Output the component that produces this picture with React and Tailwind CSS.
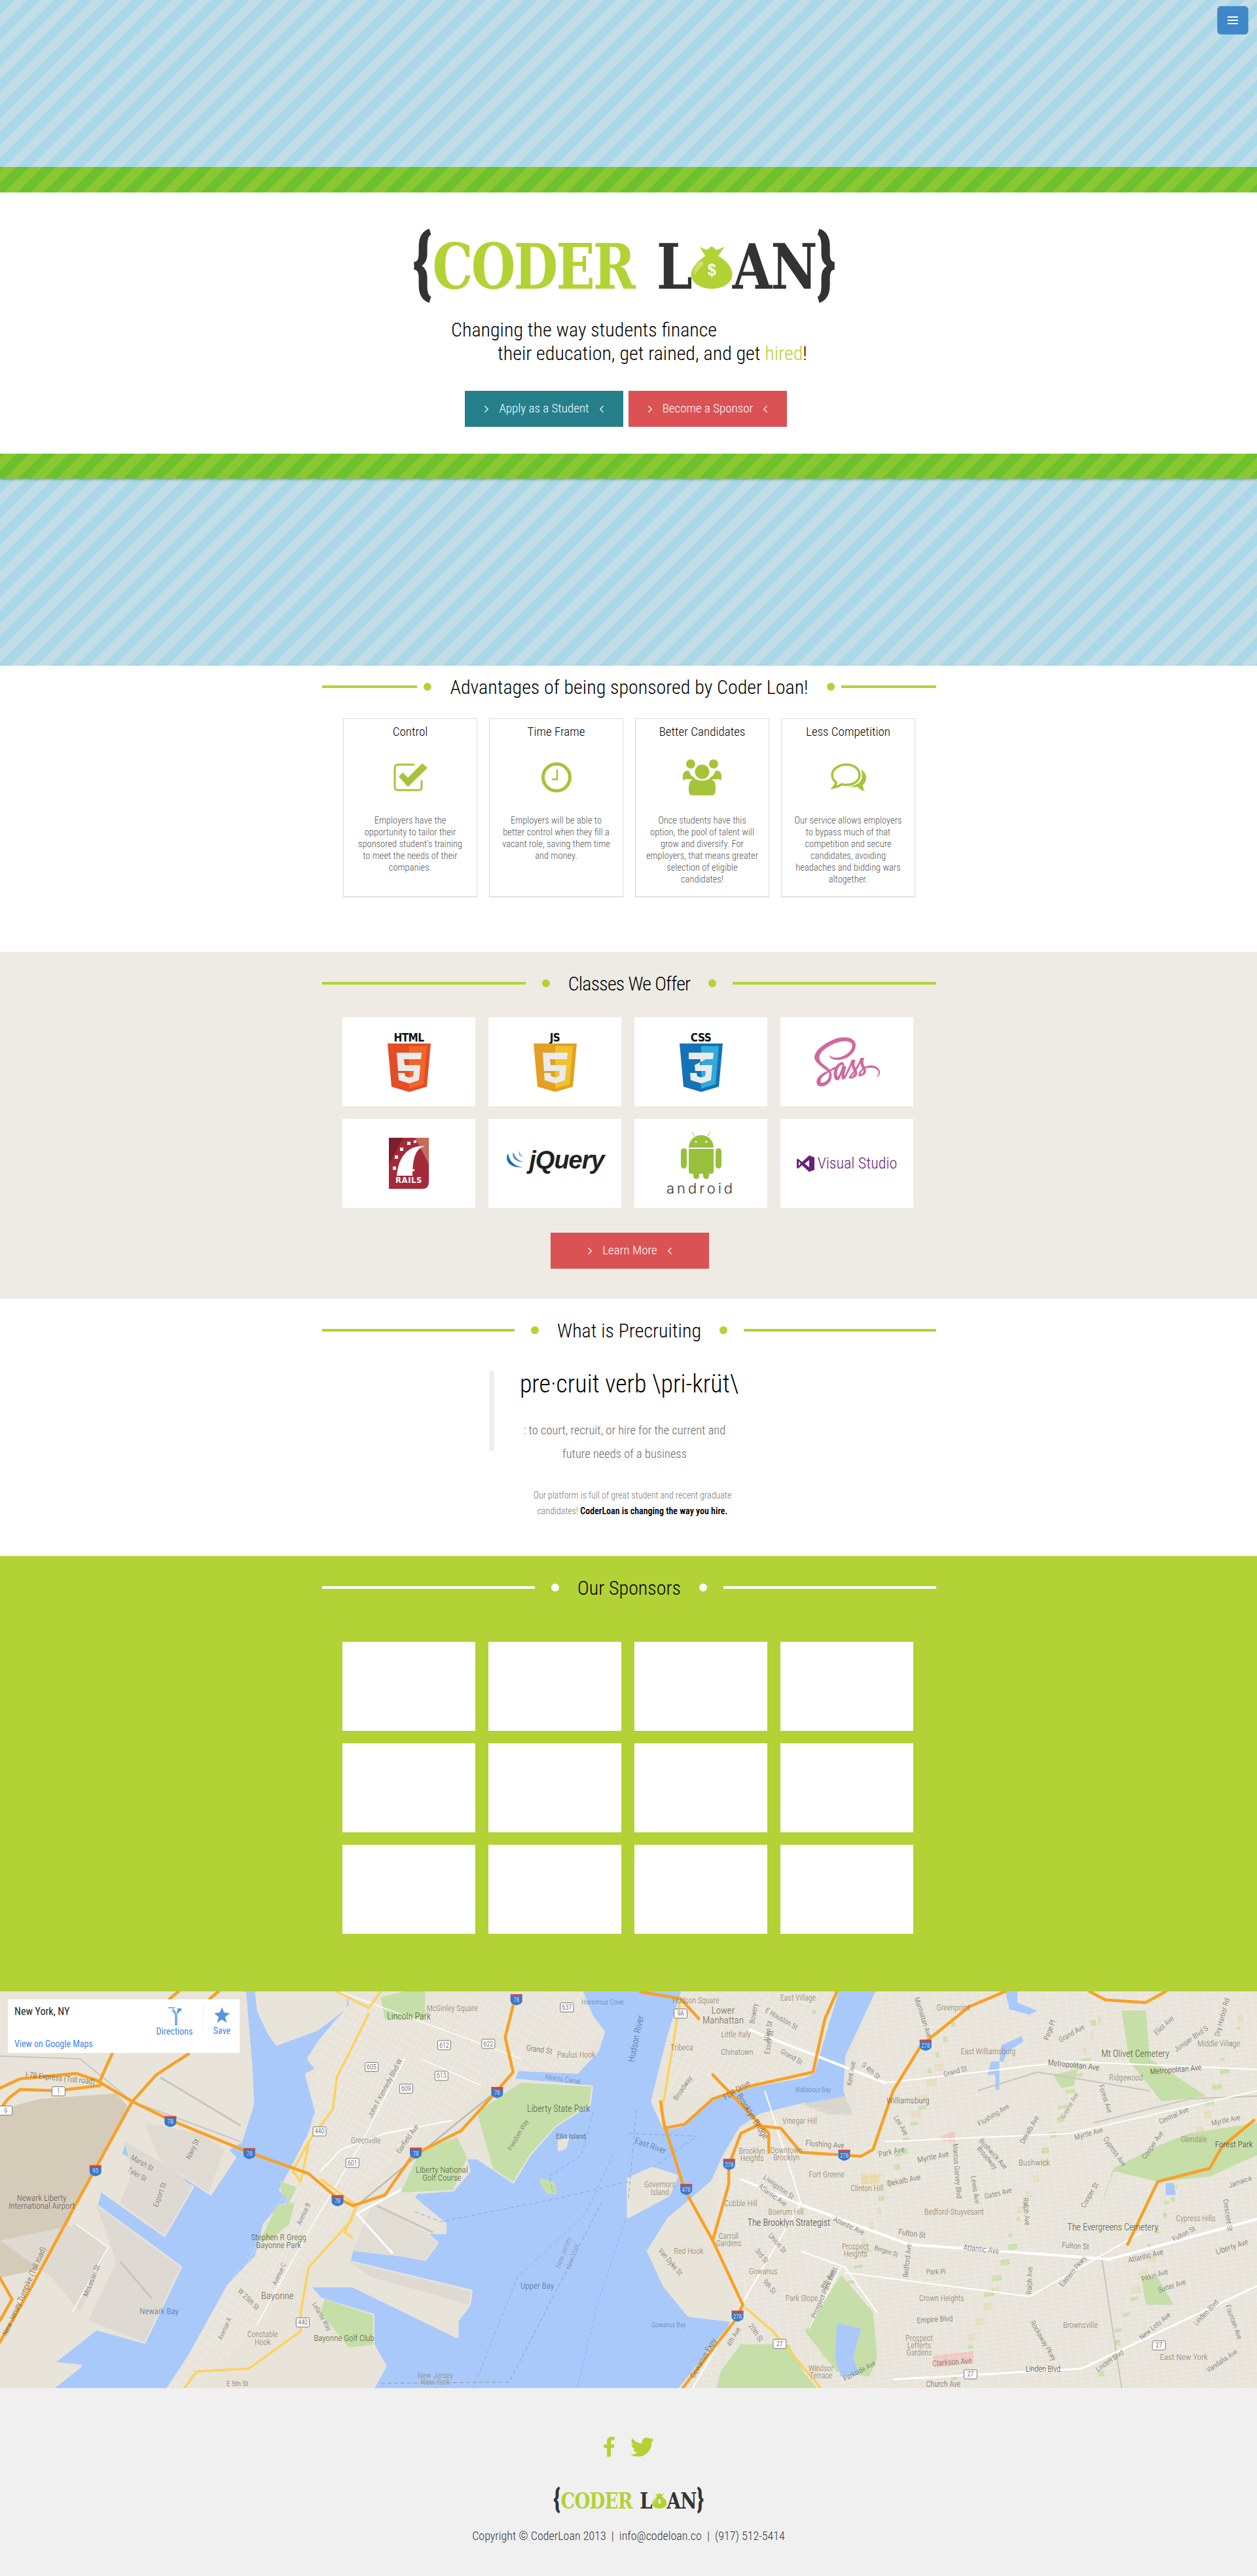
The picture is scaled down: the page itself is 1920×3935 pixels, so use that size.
import { ChevronLeft, ChevronRight } from 'lucide-react';
import { FaFacebookF, FaTwitter, FaSass } from 'react-icons/fa';

// map is drawn in the coordinates of two half-page crops, then mapped to the 1920x606 box
const L = (x, y) => [x / 1.633, (y - 28) / 2.45];
const R = (x, y) => [960 + x / 1.633, (y - 28) / 2.45];
const pl = (f, s) =>
  s
    .trim()
    .split(/\s+/)
    .map(t => {
      const [a, b] = t.split(',').map(Number);
      const [x, y] = f(a, b);
      return `${x.toFixed(1)},${y.toFixed(1)}`;
    })
    .join(' ');

const LAND = '#e8e4da';
const PARK = '#c6dea8';
const WATER = '#a9c9fb';

const landShapes = [
  [L, '0,28 610,28 625,300 630,450 600,590 565,620 585,650 525,785 470,730 310,590 300,640 480,760 410,940 250,770 240,830 450,1060 360,1340 240,1290 130,1420 200,1430 130,1513 0,1513', LAND],
  [L, '640,28 865,28 860,90 790,170 690,225 670,180 645,100', LAND],
  [L, '870,28 1450,28 1475,120 1505,180 1490,250 1440,330 1290,320 1280,360 1475,385 1470,450 1385,530 1320,640 1280,740 1190,650 1160,650 1170,700 1130,770 1040,780 1030,800 1110,900 1110,930 1060,930 1090,970 1060,1030 880,980 870,1040 1175,1150 1170,1200 1140,1260 1140,1320 880,1130 770,1130 800,1180 930,1240 930,1350 960,1430 930,1513 420,1513 470,1400 570,1130 640,1020 660,900 700,830 735,825 700,770 725,700 770,570 790,480 765,340 790,320 770,280 800,210 875,80', LAND],
  [R, '135,28 520,28 500,130 460,330 440,345 310,380 210,430 130,530 90,540 60,440 100,200', LAND],
  [R, '620,28 1568,28 1568,1513 130,1513 265,1260 150,1240 90,1130 50,1000 100,880 210,740 240,640 280,540 330,490 440,450 500,490 560,490 540,400 545,270 580,160', LAND],
  [R, '0,730 60,690 120,720 100,790 0,870', LAND],
  [L, '1350,735 1380,745 1385,780 1365,780', PARK],
  [L, '1395,590 1415,580 1410,610 1395,620', LAND],
];

const tintShapes = [
  [L, '0,470 100,430 290,410 320,460 190,830 120,1060 0,1100', '#d5cbb9'],
  [L, '0,960 190,900 270,985 200,1230 130,1100', '#dedad2'],
  [L, '310,590 430,690 480,760 410,940 300,820 330,700', '#dedad3'],
  [L, '360,520 500,560 560,620 520,780 400,660', '#dfdbd3'],
  [L, '240,830 450,1060 360,1340 220,1260 290,1040', '#dedad3'],
  [L, '870,1040 1175,1150 1170,1200 930,1100', '#dedad3'],
  [L, '880,1000 1060,1030 1090,970 1060,930 930,820', '#e1ddd5'],
  [R, '430,450 540,420 560,490 500,490', '#d9d6ce'],
  [L, '1190,480 1300,370 1475,385 1470,450 1385,530 1320,640 1280,740 1230,690', PARK],
  [L, '1050,620 1140,575 1165,650 1130,770 1000,780', PARK],
  [L, '700,740 740,760 720,820 700,770', PARK],
  [L, '690,830 735,820 720,900 670,960 650,960', PARK],
  [L, '810,1180 930,1240 930,1350 870,1360 800,1230', PARK],
  [L, '950,50 1010,28 1060,28 1060,130 960,130', PARK],
  [R, '450,1280 530,1090 610,1230 620,1400 600,1470 520,1450 440,1300', PARK],
  [R, '230,1450 280,1350 400,1350 440,1460 470,1513 220,1513', PARK],
  [R, '1170,870 1210,700 1320,740 1450,720 1568,640 1568,520 1400,560 1330,600 1210,690', PARK],
  [R, '1230,100 1290,100 1300,280 1440,420 1330,440 1250,290', PARK],
  [R, '1060,340 1120,320 1110,380 1080,390', PARK],
  [R, '1280,1100 1320,1100 1360,1200 1290,1200', PARK],
  [R, '780,570 815,550 815,590 785,590', '#efc8c0'],
  [R, '580,710 630,710 625,750 580,750', '#ead9a8'],
  [R, '760,1390 860,1375 860,1420 765,1435', '#efc8c0'],
];

const waterBits = [
  [R, '940,28 970,28 970,70 1020,100 1000,115 950,95'],
  [R, '930,230 980,195 985,215 945,255 935,290 925,290'],
  [R, '905,290 925,290 925,395 915,395 915,340 895,340'],
  [R, '520,1270 580,1290 560,1400 575,1460 530,1470 515,1400'],
  [R, '1340,745 1360,745 1365,790 1340,790'],
  [L, '1300,325 1460,370 1455,378 1295,340'],
];

const grids = [
  [L, '870,60 1450,28 1500,180 1440,330 1290,320 1200,400 1100,520 950,700 880,830 780,1000 640,1300 480,1513 420,1513 570,1130 660,900 770,570 800,210', 'url(#gridA)'],
  [R, '135,28 520,28 460,330 210,430 100,400 100,200', 'url(#gridB)'],
  [R, '620,28 1568,28 1568,1513 130,1513 265,1260 210,740 280,540 440,450 560,490 580,160', 'url(#gridC)'],
];

const orange = [
  [L, '0,390 50,355 190,335 240,360 330,440 425,510 620,630 770,710 840,800 880,830 960,790 1030,640 1150,550 1240,400 1280,330 1260,200 1285,50'],
  [L, '0,1340 80,1130 180,850 330,440 390,340 470,262'],
  [L, '250,360 280,260'],
  [L, '0,470 20,430 50,395 140,400 250,380'],
  [L, '0,1100 30,1180 0,1260'],
  [L, '445,28 420,60'],
  [L, '545,28 520,60'],
  [R, '30,30 130,55 175,130'],
  [R, '520,28 490,130 460,330 310,380 210,430 140,525 90,540 80,440'],
  [R, '90,530 140,770 210,960 285,1200 265,1260 135,1513'],
  [R, '940,28 850,85 730,230 660,400 610,620 580,645 430,630 380,540 320,530 280,560 250,680 250,750 210,960'],
  [R, '210,340 350,560 350,630'],
  [R, '1245,975 1320,740 1450,690 1480,610 1560,510'],
  [R, '1150,28 1190,60 1290,70 1340,28'],
];

const yellow = [
  [L, '840,28 920,90 950,28'],
  [L, '920,110 840,350 830,470 770,590 730,700 750,740 770,600'],
  [L, '880,880 770,1060 750,1230 750,1300 620,1440 490,1450 460,1513'],
  [L, '800,730 890,830 860,930 880,950'],
  [R, '130,50 90,420 80,480'],
  [R, '290,1210 360,1300 480,1513'],
];

const white = [
  [R, '420,820 700,975 1200,1030 1568,880', 4],
  [R, '300,170 640,370', 4],
  [R, '660,1480 1130,1440 1568,1130', 3],
  [R, '540,1080 1000,1170 1280,930', 2],
  [R, '280,730 420,820', 3],
  [R, '640,370 1100,290 1568,320', 2],
  [R, '640,590 1100,560 1568,400', 2],
  [R, '430,1000 540,1060 620,1230', 2],
  [R, '340,400 430,820 160,1513', 2],
  [R, '530,1060 450,1290', 1.5],
  [L, '980,1010 890,860 1000,770', 3],
  [L, '800,700 850,620 960,560 1130,510', 2],
  [L, '190,900 270,985 180,1230', 1.5],
  [L, '1050,280 1200,380', 1.5],
  [L, '850,30 1300,280', 1.5],
  [L, '640,1280 780,900 900,600 1010,280', 1.5],
];

// rail yards and shipping lanes
const greyLines = [
  [L, '0,270 200,280 330,440 600,590', '#c8c5bd', 2],
  [L, '400,350 600,530', '#c8c5bd', 3],
  [L, '300,1040 380,1180', '#c8c5bd', 3],
  [L, '890,830 1140,520 1240,400', '#bdbab3', 2.5],
  [L, '940,830 1080,930', '#c8c5bd', 3],
  [R, '1160,520 1400,430 1568,420', '#c8c5bd', 2],
  [R, '1180,1020 1230,1513', '#c8c5bd', 2],
  [R, '870,400 1020,330 1300,400', '#c8c5bd', 2],
];

const dashed = [
  [L, '1530,640 1460,860 1290,1100 1180,1513', '#94aacb'],
  [L, '1568,740 1400,800 1100,890 1030,850', '#7ea9e6'],
  [L, '1560,880 1490,1200 1440,1513', '#8cb4f0'],
  [L, '1480,480 1450,640 1370,720 1380,780', '#7ea9e6'],
  [L, '950,1495 1270,1490 1500,820', '#9a9a94'],
  [R, '20,470 0,800', '#7ea9e6'],
  [R, '0,560 170,570 60,690', '#7ea9e6'],
];

const labels = [
  [L, 1020, 122, 'Lincoln Park', 14, '#47603a'],
  [L, 1128, 92, 'McGinley Square', 12, '#8a7d66'],
  [L, 1345, 245, 'Grand St', 12, '#666', 8],
  [L, 1437, 265, 'Paulus Hook', 12, '#8a7d66'],
  [L, 1503, 68, 'Harsimus Cove', 11, '#5d7fae'],
  [L, 1404, 356, 'Morris Canal', 11, '#5d7fae', 8],
  [L, 1393, 467, 'Liberty State Park', 14, '#47603a'],
  [L, 1424, 570, 'Ellis Island', 11, '#444'],
  [L, 1102, 696, 'Liberty National', 13, '#47603a'],
  [L, 1102, 726, 'Golf Course', 13, '#47603a'],
  [L, 912, 585, 'Greenville', 12, '#8a7d66'],
  [L, 1016, 580, 'Garfield Ave', 11, '#666', -55],
  [L, 960, 390, 'John F Kennedy Blvd W', 11, '#666', -62],
  [L, 1292, 565, 'Freedom Way', 10, '#666', -60],
  [L, 104, 801, 'Newark Liberty', 13, '#555'],
  [L, 104, 831, 'International Airport', 13, '#555'],
  [L, 355, 670, 'Marsh St', 11, '#666', 30],
  [L, 342, 712, 'Tyler St', 11, '#666', 30],
  [L, 398, 788, 'Export St', 11, '#666', -70],
  [L, 480, 618, 'Navy St', 11, '#666', -65],
  [L, 150, 352, 'I-78 Express (Toll road)', 12, '#6b5836', 6],
  [L, 60, 1150, 'New Jersey Turnpike (Toll road)', 12, '#6b5836', -66],
  [L, 228, 1110, 'McLester St', 11, '#666', -68],
  [L, 397, 1225, 'Newark Bay', 13, '#4e6c97'],
  [L, 695, 948, 'Stephen R Gregg', 13, '#47603a'],
  [L, 695, 978, 'Bayonne Park', 13, '#47603a'],
  [L, 692, 1167, 'Bayonne', 15, '#6f6350'],
  [L, 757, 860, 'Avenue B', 10, '#666', -65],
  [L, 696, 1085, 'Avenue C', 10, '#666', -65],
  [L, 560, 1290, 'Avenue A', 10, '#666', -65],
  [L, 620, 1180, 'W 25th St', 11, '#666', 45],
  [L, 655, 1312, 'Constable', 12, '#8a7d66'],
  [L, 655, 1340, 'Hook', 12, '#8a7d66'],
  [L, 803, 1245, 'Lefante Way', 10, '#666', 60],
  [L, 858, 1325, 'Bayonne Golf Club', 13, '#47603a'],
  [L, 1340, 1128, 'Upper Bay', 13, '#4e6c97'],
  [L, 1405, 1005, 'New Jersey', 11, '#7d92b3', -70],
  [L, 1428, 1020, 'New York', 11, '#7d92b3', -70],
  [L, 1086, 1465, 'New Jersey', 12, '#8a8a80'],
  [L, 1086, 1490, 'New York', 12, '#8a8a80'],
  [L, 592, 1495, 'E 5th St', 11, '#666'],
  [R, 168, 62, 'Hudson Square', 12, '#8a7d66'],
  [R, 423, 52, 'East Village', 12, '#8a7d66'],
  [R, 236, 98, 'Lower', 15, '#6f6350'],
  [R, 236, 135, 'Manhattan', 15, '#6f6350'],
  [R, 18, 205, 'Hudson River', 14, '#4e6c97', -78],
  [R, 382, 130, 'E Houston St', 11, '#666', 30],
  [R, 268, 188, 'Little Italy', 12, '#8a7d66'],
  [R, 133, 239, 'Tribeca', 12, '#8a7d66'],
  [R, 271, 255, 'Chinatown', 12, '#8a7d66'],
  [R, 407, 272, 'Grand St', 11, '#666', 30],
  [R, 135, 390, 'Broadway', 11, '#666', -55],
  [R, 270, 397, 'FDR Drive', 12, '#6b5836', -32],
  [R, 310, 495, 'Brooklyn Bridge', 13, '#6b5836', 58],
  [R, 460, 397, 'Wallabout Bay', 10, '#5d7fae'],
  [R, 427, 513, 'Vinegar Hill', 12, '#8a7d66'],
  [R, 490, 600, 'Flushing Ave', 12, '#666', 4],
  [R, 308, 625, 'Brooklyn', 12, '#8a7d66'],
  [R, 308, 653, 'Heights', 12, '#8a7d66'],
  [R, 394, 623, 'Downtown', 12, '#8a7d66'],
  [R, 394, 650, 'Brooklyn', 12, '#8a7d66'],
  [R, 494, 713, 'Fort Greene', 12, '#8a7d66'],
  [R, 595, 766, 'Clinton Hill', 12, '#8a7d66'],
  [R, 78, 751, 'Governors', 12, '#8a7d66'],
  [R, 78, 779, 'Island', 12, '#8a7d66'],
  [R, 55, 605, 'East River', 13, '#4e6c97', 20],
  [R, 280, 821, 'Cobble Hill', 12, '#8a7d66'],
  [R, 393, 853, 'Boerum Hill', 12, '#8a7d66'],
  [R, 400, 894, 'The Brooklyn Strategist', 14, '#444'],
  [R, 250, 943, 'Carroll', 12, '#8a7d66'],
  [R, 250, 971, 'Gardens', 12, '#8a7d66'],
  [R, 150, 1001, 'Red Hook', 12, '#8a7d66'],
  [R, 336, 1077, 'Gowanus', 12, '#8a7d66'],
  [R, 432, 1177, 'Park Slope', 12, '#8a7d66'],
  [R, 566, 983, 'Prospect', 12, '#8a7d66'],
  [R, 566, 1011, 'Heights', 12, '#8a7d66'],
  [R, 100, 1276, 'Gowanus Bay', 10, '#5d7fae'],
  [R, 656, 628, 'Park Ave', 12, '#666', -12],
  [R, 760, 647, 'Myrtle Ave', 12, '#666', -12],
  [R, 687, 735, 'Dekalb Ave', 12, '#666', -12],
  [R, 812, 852, 'Bedford-Stuyvesant', 12, '#8a7d66'],
  [R, 707, 934, 'Fulton St', 12, '#666', 8],
  [R, 880, 992, 'Atlantic Ave', 12, '#666', 6],
  [R, 550, 905, 'Atlantic Ave', 11, '#666', 25],
  [R, 375, 760, 'Livingston St', 11, '#666', 36],
  [R, 360, 790, 'Atlantic Ave', 11, '#666', 36],
  [R, 1115, 980, 'Fulton St', 12, '#666', 4],
  [R, 1290, 1018, 'Atlantic Ave', 12, '#666', -14],
  [R, 1505, 983, 'Liberty Ave', 12, '#666', -18],
  [R, 1385, 935, 'Fulton St', 11, '#666', -28],
  [R, 1415, 877, 'Cypress Hills', 12, '#8a7d66'],
  [R, 1208, 910, 'The Evergreens Cemetery', 14, '#47603a'],
  [R, 1012, 668, 'Bushwick', 13, '#8a7d66'],
  [R, 1264, 262, 'Mt Olivet Cemetery', 14, '#47603a'],
  [R, 1241, 351, 'Ridgewood', 12, '#8a7d66'],
  [R, 1110, 303, 'Metropolitan Ave', 12, '#444', 6],
  [R, 1365, 320, 'Metropolitan Ave', 12, '#444', -5],
  [R, 897, 252, 'East Williamsburg', 12, '#8a7d66'],
  [R, 815, 327, 'Grand St', 11, '#666', -16],
  [R, 810, 88, 'Greenpoint', 12, '#8a7d66'],
  [R, 697, 437, 'Williamsburg', 13, '#6f6350'],
  [R, 910, 490, 'Flushing Ave', 11, '#666', -32],
  [R, 1000, 545, 'Dekalb Ave', 11, '#666', -60],
  [R, 1148, 560, 'Myrtle Ave', 11, '#666', -16],
  [R, 1360, 492, 'Central Ave', 11, '#666', -24],
  [R, 1490, 510, 'Myrtle Ave', 11, '#666', -12],
  [R, 1410, 580, 'Glendale', 12, '#8a7d66'],
  [R, 1510, 600, 'Forest Park', 13, '#444'],
  [R, 1307, 603, 'Cooper Ave', 11, '#666', -55],
  [R, 1213, 627, 'Cypress Ave', 11, '#666', 55],
  [R, 910, 635, 'Bushwick Ave', 11, '#666', 48],
  [R, 895, 650, 'Broadway', 11, '#666', 50],
  [R, 820, 700, 'Marcus Garvey Blvd', 11, '#666', 86],
  [R, 865, 770, 'Lewis Ave', 11, '#666', 82],
  [R, 922, 783, 'Gates Ave', 11, '#666', -14],
  [R, 993, 852, 'Ralph Ave', 11, '#666', 86],
  [R, 1150, 790, 'Cooper St', 11, '#666', -60],
  [R, 767, 1078, 'Park Pl', 11, '#666'],
  [R, 781, 1177, 'Crown Heights', 12, '#8a7d66'],
  [R, 764, 1255, 'Empire Blvd', 12, '#666', -3],
  [R, 725, 1325, 'Prospect', 12, '#8a7d66'],
  [R, 725, 1353, 'Lefferts', 12, '#8a7d66'],
  [R, 725, 1381, 'Gardens', 12, '#8a7d66'],
  [R, 807, 1415, 'Clarkson Ave', 12, '#666', -4],
  [R, 1034, 1442, 'Linden Blvd', 12, '#444'],
  [R, 1127, 1276, 'Brownsville', 12, '#8a7d66'],
  [R, 1385, 1396, 'East New York', 13, '#8a7d66'],
  [R, 1312, 1090, 'Pitkin Ave', 11, '#666', -18],
  [R, 1355, 1130, 'Sutter Ave', 11, '#666', -18],
  [R, 1313, 1280, 'New Lots Ave', 11, '#666', -40],
  [R, 1440, 1230, 'Linden Blvd', 11, '#666', -45],
  [R, 1108, 1075, 'Eastern Pkwy', 11, '#666', -50],
  [R, 1000, 1110, 'Ralph Ave', 11, '#666', -88],
  [R, 1035, 1335, 'Rockaway Pkwy', 11, '#666', 60],
  [R, 1200, 1410, 'Linden Blvd', 11, '#666', -35],
  [R, 576, 1448, 'Parkside Ave', 11, '#666', -28],
  [R, 785, 1498, 'Church Ave', 12, '#666'],
  [R, 480, 1438, 'Windsor', 12, '#8a7d66'],
  [R, 480, 1466, 'Terrace', 12, '#8a7d66'],
  [R, 488, 1155, 'Prospect Park West', 11, '#666', -66],
  [R, 497, 1105, '8th Ave', 11, '#666', -60],
  [R, 186, 1400, 'Gowanus Expy', 12, '#6b5836', -60],
  [R, 262, 1320, '4th Ave', 11, '#666', -60],
  [R, 318, 1305, '20th St', 11, '#666', 55],
  [R, 352, 1133, '9th St', 11, '#666', 50],
  [R, 333, 1018, '3rd St', 11, '#666', 50],
  [R, 372, 970, 'Union St', 11, '#666', 50],
  [R, 643, 1000, 'Bergen St', 10, '#666', 18],
  [R, 695, 1035, 'Bedford Ave', 11, '#666', -84],
  [R, 105, 1040, 'Van Dyke St', 11, '#666', 50],
  [R, 348, 178, 'Allen St', 11, '#666', -80],
  [R, 350, 218, 'Essex St', 11, '#666', -80],
  [R, 312, 110, 'Bowery', 11, '#666', -80],
  [R, 735, 125, 'Manhattan Ave', 11, '#666', 72],
  [R, 680, 530, 'Lee Ave', 11, '#666', 60],
  [R, 555, 335, 'Kent Ave', 11, '#666', -80],
  [R, 605, 325, 'S 4th St', 11, '#666', 40],
  [R, 1050, 172, 'Page Pl', 11, '#666', -70],
  [R, 1105, 185, 'Grand Ave', 11, '#666', -30],
  [R, 1335, 155, 'Eliot Ave', 11, '#666', -42],
  [R, 1403, 205, 'Juniper Blvd S', 11, '#666', -35],
  [R, 1472, 224, 'Middle Village', 12, '#8a7d66'],
  [R, 1480, 125, 'Dry Harbor Rd', 11, '#666', -75],
  [R, 1190, 430, 'Forest Ave', 11, '#666', 72],
  [R, 1100, 455, 'Greene Ave', 10, '#8a7d66', -60],
  [R, 1495, 865, 'Crescent St', 11, '#666', 82],
  [R, 1525, 740, 'Jamaica', 11, '#666', -20],
  [R, 1510, 1265, 'Fountain Ave', 11, '#666', 70],
  [R, 1480, 1410, 'Vandalia Ave', 11, '#666', -34],
];

const shields = [
  [L, 425, 514, '78'], [L, 622, 634, '78'], [L, 842, 810, '78'], [L, 1037, 632, '78'], [L, 1240, 405, '78'], [L, 1288, 58, '78'], [L, 238, 698, '95'],
  [R, 144, 768, '478'], [R, 251, 674, '278'], [R, 538, 640, '278'], [R, 741, 228, '278'], [R, 272, 1242, '278'],
];

const badges = [
  [L, 797, 552, '440'], [L, 755, 1267, '440'], [L, 146, 402, '1'], [L, 14, 474, '9'], [L, 1108, 229, '612'], [L, 1218, 224, '622'], [L, 1414, 88, '637'],
  [L, 927, 311, '605'], [L, 1101, 344, '613'], [L, 1013, 392, '609'], [L, 879, 670, '601'],
  [R, 130, 111, '9A'], [R, 377, 1347, '27'], [R, 853, 1461, '27'], [R, 1323, 1353, '27'],
];

// little parks and pale blocks scattered over Brooklyn
const specks = Array.from({ length: 90 }, (_, i) => {
  const x = 1240 + ((i * 137) % 660);
  const y = 30 + ((i * 211) % 560);
  return { x, y, w: 6 + (i % 4) * 3, h: 5 + (i % 3) * 3, c: i % 3 === 2 ? '#e6dcbf' : '#c9dfa9' };
});

function MapDrawing() {
  return (
    <svg viewBox="0 0 1920 606" className="block h-[606px] w-full bg-[#a9c9fb]">
      <defs>
        <pattern id="gridA" width="13" height="8" patternUnits="userSpaceOnUse" patternTransform="rotate(-62)">
          <path d="M0 0H13M0 0V8" stroke="#fff" strokeWidth="0.7" opacity="0.8" fill="none" />
        </pattern>
        <pattern id="gridB" width="11" height="9" patternUnits="userSpaceOnUse" patternTransform="rotate(25)">
          <path d="M0 0H11M0 0V9" stroke="#fff" strokeWidth="0.7" opacity="0.8" fill="none" />
        </pattern>
        <pattern id="gridC" width="14" height="7" patternUnits="userSpaceOnUse" patternTransform="rotate(-8)">
          <path d="M0 0H14M0 0V7" stroke="#fff" strokeWidth="0.7" opacity="0.75" fill="none" />
        </pattern>
      </defs>
      {landShapes.map(([f, s, c], i) => (
        <polygon key={i} points={pl(f, s)} fill={c} stroke={c} strokeWidth="5" strokeLinejoin="round" />
      ))}
      {tintShapes.map(([f, s, c], i) => <polygon key={i} points={pl(f, s)} fill={c} />)}
      {specks.map((b, i) => <rect key={i} x={b.x} y={b.y} width={b.w} height={b.h} fill={b.c} transform={`rotate(-8 ${b.x} ${b.y})`} />)}
      {grids.map(([f, s, c], i) => <polygon key={i} points={pl(f, s)} fill={c} />)}
      {tintShapes.filter(t => t[2] === PARK).map(([f, s, c], i) => <polygon key={i} points={pl(f, s)} fill={c} />)}
      {waterBits.map(([f, s], i) => <polygon key={i} points={pl(f, s)} fill={WATER} />)}
      {dashed.map(([f, s, c], i) => (
        <polyline key={i} points={pl(f, s)} fill="none" stroke={c} strokeWidth="1" strokeDasharray="6 4" />
      ))}
      {greyLines.map(([f, s, c, w], i) => (
        <polyline key={i} points={pl(f, s)} fill="none" stroke={c} strokeWidth={w} strokeLinejoin="round" />
      ))}
      {white.map(([f, s, w], i) => (
        <polyline key={i} points={pl(f, s)} fill="none" stroke="#fff" strokeWidth={w} strokeLinejoin="round" />
      ))}
      {yellow.map(([f, s], i) => (
        <polyline key={i} points={pl(f, s)} fill="none" stroke="#fdd25c" strokeWidth="3.5" strokeLinejoin="round" />
      ))}
      {orange.map(([f, s], i) => (
        <polyline key={i} points={pl(f, s)} fill="none" stroke="#f9a024" strokeWidth="4.5" strokeLinejoin="round" strokeLinecap="round" />
      ))}
      {labels.map(([f, x, y, text, size, color, rot], i) => {
        const [px, py] = f(x, y);
        return (
          <text
            key={i}
            x={px}
            y={py + size * 0.35}
            fontSize={size}
            fill={color}
            textAnchor="middle"
            transform={rot ? `rotate(${rot} ${px} ${py})` : undefined}
          >
            {text}
          </text>
        );
      })}
      {shields.map(([f, x, y, n], i) => {
        const [px, py] = f(x, y);
        return (
          <g key={i} transform={`translate(${px - 9} ${py - 9})`}>
            <path d="M0 2H18V11Q18 16 9 18Q0 16 0 11Z" fill="#3c78c8" />
            <rect y="1" width="18" height="3" fill="#d6453d" />
            <text x="9" y="13" fontSize="9" fill="#fff" textAnchor="middle">{n}</text>
          </g>
        );
      })}
      {badges.map(([f, x, y, n], i) => {
        const [px, py] = f(x, y);
        return (
          <g key={i}>
            <rect x={px - 10} y={py - 7} width="20" height="14" rx="2" fill="#fff" stroke="#777" />
            <text x={px} y={py + 3.5} fontSize="10" fill="#333" textAnchor="middle">{n}</text>
          </g>
        );
      })}
    </svg>
  );
}

function MoneyBag({ footer }) {
  return (
    <span className={`relative inline-block shrink-0 ${footer ? 'h-[24px] w-[25px]' : 'h-[66px] w-[70px]'}`}>
      <svg viewBox="0 0 58 66" preserveAspectRatio="none" className="absolute inset-0 h-full w-full">
        <path d="M12 2L22 7L29 1L36 7L47 2L38 16C52 24 58 36 58 44C58 58 44 66 29 66C14 66 0 58 0 44C0 36 8 24 20 16Z" fill="#b2d235" />
        <path d="M13 24C6 30 3 38 4 46C8 40 12 34 17 30C18 27 16 24 13 24Z" fill="#cbe36b" />
      </svg>
      <span className={`absolute inset-0 flex items-center justify-center font-['Liberation_Sans',sans-serif] font-bold tracking-normal text-white ${footer ? 'pt-[3px] text-[9px]' : 'pt-[8px] text-[26px]'}`}>$</span>
    </span>
  );
}

function Logo({ footer }) {
  const slab = "font-['DejaVu_Serif',serif] font-bold";
  const brace = "font-['Roboto',sans-serif] font-bold [font-stretch:75%] text-[#333]";
  if (footer) {
    return (
      <div className={`flex h-[40px] scale-x-90 items-center leading-none ${slab}`}>
        <span className={`flex w-[13px] -translate-y-[2px] justify-center text-[42px] ${brace}`}>{'{'}</span>
        <span className="text-[34px] tracking-[-1px] text-[#b2d235]">CODER</span>
        <span className="ml-[13px] flex items-center text-[34px] tracking-[-0.7px] text-[#333]">
          L<MoneyBag footer />AN
        </span>
        <span className={`flex w-[13px] -translate-y-[2px] justify-center text-[42px] ${brace}`}>{'}'}</span>
      </div>
    );
  }
  return (
    <div className={`flex h-[111px] scale-x-90 items-center leading-none ${slab}`}>
      <span className={`flex w-[34px] -translate-y-[6px] justify-center text-[118px] ${brace}`}>{'{'}</span>
      <span className="text-[96px] tracking-[-3px] text-[#b2d235]">CODER</span>
      <span className="ml-[39px] flex items-center text-[96px] tracking-[-2px] text-[#333]">
        L<MoneyBag />AN
      </span>
      <span className={`flex w-[34px] -translate-y-[6px] justify-center text-[118px] ${brace}`}>{'}'}</span>
    </div>
  );
}

function ArrowButton({ color, width, children }) {
  return (
    <button type="button" className={`flex h-[55px] items-center justify-center gap-[10px] text-[19px] text-white ${color} ${width}`}>
      <ChevronRight size={18} strokeWidth={1.5} />
      {children}
      <ChevronLeft size={18} strokeWidth={1.5} />
    </button>
  );
}

function SectionHeading({ title, light, lineGap = 'gap-[25px]', tight = '' }) {
  const bar = light ? 'bg-white' : 'bg-[#b2d235]';
  return (
    <div className={`flex h-10 w-[938px] items-center ${lineGap}`}>
      <div className={`h-[4px] flex-1 ${bar}`} />
      <div className="flex items-center gap-[28px]">
        <div className={`h-[12px] w-[12px] rounded-full ${bar}`} />
        <h2 className={`whitespace-nowrap text-[30px] font-light text-black ${tight}`}>{title}</h2>
        <div className={`h-[12px] w-[12px] rounded-full ${bar}`} />
      </div>
      <div className={`h-[4px] flex-1 ${bar}`} />
    </div>
  );
}

function CheckIcon() {
  return (
    <svg viewBox="0 0 52 43" className="h-[43px] w-[52px]">
      <path d="M32 2H7Q2 2 2 7V36Q2 41 7 41H38Q43 41 43 36V26" fill="none" stroke="#a5c439" strokeWidth="3" />
      <path d="M8 20L14 14L22 22L44 0L52 7L22 36Z" fill="#a5c439" />
    </svg>
  );
}

function ClockIcon() {
  return (
    <svg viewBox="0 0 46 46" className="h-[47px] w-[46px]">
      <circle cx="23" cy="23" r="20.5" fill="none" stroke="#a5c439" strokeWidth="5" />
      <path d="M24 11V26H16" fill="none" stroke="#a5c439" strokeWidth="2.5" />
    </svg>
  );
}

function UsersIcon() {
  return (
    <svg viewBox="0 0 59 55" className="h-[55px] w-[59px]">
      <g fill="#a5c439">
        <ellipse cx="12" cy="7" rx="7" ry="7" />
        <ellipse cx="47" cy="7" rx="7" ry="7" />
        <path d="M0 32V24Q1 17 9 17Q11 25 18 28V32Q6 28 0 32Z" />
        <path d="M59 32V24Q58 17 50 17Q48 25 41 28V32Q53 28 59 32Z" />
        <ellipse cx="29.5" cy="19" rx="11" ry="11" />
        <path d="M9 47V42Q9 31 19 30Q29 35 40 30Q50 31 50 42V47Q50 55 44 55H15Q9 55 9 47Z" />
      </g>
    </svg>
  );
}

function CommentsIcon() {
  return (
    <svg viewBox="0 0 54 43" className="h-[43px] w-[54px]">
      <path d="M24 2C12 2 2 9 2 18C2 23 4 26 8 29C8 32 6 35 4 37C10 36 14 34 17 32C20 33 22 33 24 33C36 33 44 26 44 18C44 9 36 2 24 2Z" fill="none" stroke="#a5c439" strokeWidth="3.5" />
      <path d="M46 9C52 13 54 18 54 22C54 27 52 30 49 33C49 36 50 40 52 43C47 41 43 39 41 36C37 37 31 36 27 36C36 35 48 30 48 19C48 15 47 12 46 9Z" fill="#a5c439" />
    </svg>
  );
}

const advantages = [
  {
    title: 'Control',
    icon: <CheckIcon />,
    lines: ['Employers have the', 'opportunity to tailor their', "sponsored student's training", 'to meet the needs of their', 'companies.'],
  },
  {
    title: 'Time Frame',
    icon: <ClockIcon />,
    lines: ['Employers will be able to', 'better control when they fill a', 'vacant role, saving them time', 'and money.'],
  },
  {
    title: 'Better Candidates',
    icon: <UsersIcon />,
    lines: ['Once students have this', 'option, the pool of talent will', 'grow and diversify. For', 'employers, that means greater', 'selection of eligible', 'candidates!'],
  },
  {
    title: 'Less Competition',
    icon: <CommentsIcon />,
    lines: ['Our service allows employers', 'to bypass much of that', 'competition and secure', 'candidates, avoiding', 'headaches and bidding wars', 'altogether.'],
  },
];

function AdvantageCard({ item }) {
  return (
    <div className="flex h-[273px] flex-col items-center border border-[#ddd] px-2 shadow-[0_1px_1px_rgba(0,0,0,0.08)]">
      <h3 className="mt-[8px] h-[24px] text-[19px] font-light leading-[24px] text-black">{item.title}</h3>
      <div className="mt-[22px] flex h-[70px] items-center justify-center">{item.icon}</div>
      <p className="mt-[23px] text-center text-[14.5px] leading-[18px] text-[#555]">
        {item.lines.map(line => <span key={line} className="block whitespace-nowrap">{line}</span>)}
      </p>
    </div>
  );
}

function Shield({ back, mid, front, digit }) {
  return (
    <svg viewBox="0 0 66 74" className="h-[74px] w-[66px]">
      <path d="M0 0H66L60 66L33 74L6 66Z" fill={back} />
      <path d="M33 4V69L55 62L60 4Z" fill={mid} />
      {digit === '5' ? (
        <path d="M14 14H52L51 24H25L26 33H50L48 56L33 61L17 56L16 45H26L27 50L33 52L39 50L40 42H16Z" fill={front} />
      ) : (
        <path d="M14 14H52L51 24H32L31 33H50L48 56L33 61L17 56L16 45H26L27 50L33 52L39 50L40 42H24L23 33L40 24H14Z" fill={front} />
      )}
    </svg>
  );
}

function TechTile({ children }) {
  return <div className="flex h-[136px] flex-col items-center justify-center bg-white">{children}</div>;
}

function BadgeLabel({ children }) {
  return (
    <span className="font-['DejaVu_Sans',sans-serif] text-[17px] font-bold leading-[17px] tracking-[-0.5px] text-[#111]">
      {children}
    </span>
  );
}

function TechLogos() {
  return (
    <>
      <TechTile>
        <BadgeLabel>HTML</BadgeLabel>
        <Shield back="#e44d26" mid="#f16529" front="#ebebeb" digit="5" />
      </TechTile>
      <TechTile>
        <BadgeLabel>JS</BadgeLabel>
        <Shield back="#e3a024" mid="#f2c12e" front="#ebebeb" digit="5" />
      </TechTile>
      <TechTile>
        <BadgeLabel>CSS</BadgeLabel>
        <Shield back="#1572b6" mid="#33a9dc" front="#ebebeb" digit="3" />
      </TechTile>
      <TechTile>
        <FaSass className="h-[80px] w-[110px] text-[#cf6a9e]" />
      </TechTile>
      <TechTile>
        <div className="relative h-[78px] w-[61px]">
          <svg viewBox="0 0 61 78" className="absolute inset-0 h-full w-full">
            <path d="M6 0H61V68Q61 78 51 78H0V6Q0 0 6 0Z" fill="#a42a3a" />
            <path d="M0 0H22L0 40Z" fill="#7a1f2c" />
            <path d="M40 0H61V40Z" fill="#c86a5c" />
            <path d="M12 58C14 34 26 10 56 13C44 14 36 26 36 58Z" fill="#fff" />
            <g fill="#fff">
              <rect x="6" y="44" width="5" height="5" />
              <rect x="9" y="27" width="5" height="5" />
              <rect x="17" y="15" width="5" height="5" />
              <rect x="28" y="6" width="5" height="5" />
              <rect x="38" y="4" width="4" height="4" />
              <rect x="36" y="20" width="3" height="3" />
              <rect x="34" y="28" width="3" height="3" />
              <rect x="33" y="37" width="3" height="3" />
              <rect x="35" y="48" width="4" height="3" />
            </g>
          </svg>
          <span className="absolute bottom-[7px] left-0 right-0 text-center font-['DejaVu_Sans',sans-serif] text-[13px] font-bold leading-none tracking-[0.5px] text-white">RAILS</span>
        </div>
      </TechTile>
      <TechTile>
        <div className="-mt-[10px] flex items-center gap-[8px]">
          <svg viewBox="0 0 28 28" className="h-[28px] w-[28px]">
            <path d="M4 4C-2 14 6 27 27 25C14 24 6 16 4 4Z" fill="#1b6cb5" />
            <path d="M12 2C9 9 15 17 27 17C19 15 14 9 12 2Z" fill="#3f8fd2" />
            <path d="M21 0C19 5 22 9 28 9C24 8 22 4 21 0Z" fill="#6aaee0" />
          </svg>
          <span className="font-['Liberation_Sans',sans-serif] text-[38px] font-bold italic leading-none tracking-[-1px] text-[#222]">jQuery</span>
        </div>
      </TechTile>
      <TechTile>
        <svg viewBox="0 0 62 72" className="h-[72px] w-[62px]">
          <g fill="#97c03d">
            <path d="M12 24A19 19 0 0 1 50 24Z" />
            <path d="M12 26H50V60Q50 64 46 64H16Q12 64 12 60Z" />
            <rect x="0" y="25" width="9" height="31" rx="4.5" />
            <rect x="53" y="25" width="9" height="31" rx="4.5" />
            <rect x="19" y="58" width="9" height="14" rx="4.5" />
            <rect x="34" y="58" width="9" height="14" rx="4.5" />
          </g>
          <path d="M21 7L17 0M41 7L45 0" stroke="#97c03d" strokeWidth="1" />
          <circle cx="23" cy="15" r="1.6" fill="#fff" />
          <circle cx="39" cy="15" r="1.6" fill="#fff" />
        </svg>
        <span className="mt-[3px] font-['Inter',sans-serif] text-[22px] font-light leading-[22px] tracking-[4px] text-[#333]">android</span>
      </TechTile>
      <TechTile>
        <div className="flex items-center gap-[5px]">
          <svg viewBox="0 0 27 25" className="h-[25px] w-[27px]">
            <path d="M19 0L27 3V22L19 25L8 15L2 20L0 19V6L2 5L8 10ZM19 7L12 12.5L19 18ZM3 9V16L6 12.5Z" fill="#68217a" />
          </svg>
          <span className="text-[24px] text-[#68217a]">Visual Studio</span>
        </div>
      </TechTile>
    </>
  );
}

export default function App() {
  return (
    <div className="font-['Roboto',sans-serif] font-light [font-stretch:75%] text-black">
      <button type="button" className="absolute right-[13px] top-[9px] flex h-[44px] w-[48px] flex-col items-center justify-center gap-[2.5px] rounded-md border border-[#6aa3d0] bg-[#3e87c8]">
        <span className="h-[2.5px] w-4 bg-white" />
        <span className="h-[2.5px] w-4 bg-white" />
        <span className="h-[2.5px] w-4 bg-white" />
      </button>

      <div className="h-[255px] bg-[repeating-linear-gradient(135deg,#c3dde6_0px,#c3dde6_1.41px,#a9d8e8_1.41px,#a9d8e8_15.56px,#c3dde6_15.56px,#c3dde6_28.28px)]" />
      <div className="h-[39px] bg-[repeating-linear-gradient(135deg,#6dc02e_0px,#6dc02e_4.24px,#8ac832_4.24px,#8ac832_18.38px,#6dc02e_18.38px,#6dc02e_28.28px)]" />

      <section className="flex h-[399px] flex-col items-center bg-white pt-[58px]">
        <div className="-ml-[12px]">
          <Logo />
        </div>
        <p className="mt-[23px] w-[560px] whitespace-nowrap pl-[9px] text-[30px] font-light leading-[36px] text-black">
          Changing the way students finance
          <span className="block pl-[71px]">
            their education, get rained, and get <span className="text-[#b2d235]">hired</span>!
          </span>
        </p>
        <div className="-ml-[8px] mt-[39px] flex gap-2">
          <ArrowButton color="bg-[#25808c]" width="w-[242px]">Apply as a Student</ArrowButton>
          <ArrowButton color="bg-[#da5254]" width="w-[242px]">Become a Sponsor</ArrowButton>
        </div>
      </section>

      <div className="relative h-[38px] bg-[repeating-linear-gradient(135deg,#6dc02e_0px,#6dc02e_4.24px,#8ac832_4.24px,#8ac832_18.38px,#6dc02e_18.38px,#6dc02e_28.28px)] shadow-[0_2px_3px_rgba(0,0,0,0.25)]" />
      <div className="h-[286px] bg-[repeating-linear-gradient(135deg,#c3dde6_0px,#c3dde6_1.41px,#a9d8e8_1.41px,#a9d8e8_15.56px,#c3dde6_15.56px,#c3dde6_28.28px)]" />

      <section className="h-[437px] bg-white pl-[492px] pt-[12px]">
        <SectionHeading title="Advantages of being sponsored by Coder Loan!" lineGap="gap-[10px]" />
        <div className="ml-[32px] mt-[28px] grid w-[874px] grid-cols-4 gap-x-[18px]">
          {advantages.map(item => <AdvantageCard key={item.title} item={item} />)}
        </div>
      </section>

      <section className="h-[530px] bg-[#edebe4] pl-[492px] pt-[28px]">
        <SectionHeading title="Classes We Offer" tight="tracking-[-0.8px]" />
        <div className="ml-[31px] mt-[32px] grid w-[872px] grid-cols-4 gap-x-5 gap-y-[19px]">
          <TechLogos />
        </div>
        <div className="ml-[349px] mt-[38px]">
          <ArrowButton color="bg-[#da5254]" width="w-[242px]">Learn More</ArrowButton>
        </div>
      </section>

      <section className="h-[393px] bg-white pl-[492px] pt-[28px]">
        <SectionHeading title="What is Precruiting" />
        <div className="ml-[255px] mt-[52px] h-[122px] w-[420px] border-l-8 border-[#eee]">
          <h3 className="-mt-[10px] h-10 text-center text-[38px] font-light leading-10 text-black">pre·cruit verb \pri-krüt\</h3>
          <p className="mt-[33px] pr-[14px] text-center text-[18.5px] leading-[36px] text-[#666]">
            : to court, recruit, or hire for the current and
            <br />
            future needs of a business
          </p>
        </div>
        <p className="ml-[319px] mt-[56px] w-[310px] whitespace-nowrap text-center text-[14px] leading-[24px] text-[#777]">
          Our platform is full of great student and recent graduate
          <br />
          candidates! <strong className="font-semibold text-black">CoderLoan is changing the way you hire.</strong>
        </p>
      </section>

      <section className="h-[665px] bg-[#b2d235] pl-[492px] pt-[28px]">
        <SectionHeading title="Our Sponsors" light />
        <div className="ml-[31px] mt-[63px] grid w-[872px] grid-cols-4 gap-x-5 gap-y-[19px]">
          {Array.from({ length: 12 }).map((_, i) => <div key={i} className="h-[136px] bg-white" />)}
        </div>
      </section>

      <section className="relative h-[606px] overflow-hidden">
        <MapDrawing />
        <div className="absolute left-[12px] top-[12px] h-[82px] w-[354px] bg-white text-[14px]">
          <div className="absolute left-[10px] top-[7px] text-[16px] font-normal text-[#222]">New York, NY</div>
          <div className="absolute left-[227px] top-[12px] flex w-[55px] flex-col items-center text-[14px] font-normal leading-[18px] text-[#4285f4]">
            <svg viewBox="0 0 20 28" className="h-[28px] w-[20px]">
              <path d="M0 2H8L5 5L10 11V28H14V10L8 3L11 0H0Z" fill="#7cb1ea" />
              <path d="M20 2H13L15 4L13 7L15 10L18 5L20 7Z" fill="#4e92e0" />
            </svg>
            Directions
          </div>
          <div className="absolute bottom-[33px] left-[298px] top-[8px] w-px bg-[#eee]" />
          <div className="absolute left-[312px] top-[9px] flex w-[30px] flex-col items-center text-[14px] font-normal leading-[18px] text-[#4285f4]">
            <svg viewBox="0 0 24 24" className="h-[30px] w-[24px]">
              <path d="M12 0L15 8L24 9.500L17 15L19.500 24L12 19L4.500 24L7 15L0 9.500L9 8Z" fill="#5b95e0" />
            </svg>
            Save
          </div>
          <div className="absolute left-[10px] top-[58px] text-[14px] font-normal text-[#4285f4]">View on Google Maps</div>
        </div>
      </section>

      <footer className="flex h-[287px] flex-col items-center bg-[#f0f0f0] pt-[70px]">
        <div className="flex items-center gap-[23px] text-[#b2d235]">
          <FaFacebookF className="h-[39px] w-[19px]" />
          <FaTwitter className="h-[36px] w-[36px]" />
        </div>
        <div className="mt-[43px]">
          <Logo footer />
        </div>
        <p className="mt-[22px] text-[18px] leading-[24px] text-[#333]">
          Copyright © CoderLoan 2013 &nbsp;|&nbsp; info@codeloan.co &nbsp;|&nbsp; (917) 512-5414
        </p>
      </footer>
    </div>
  );
}
